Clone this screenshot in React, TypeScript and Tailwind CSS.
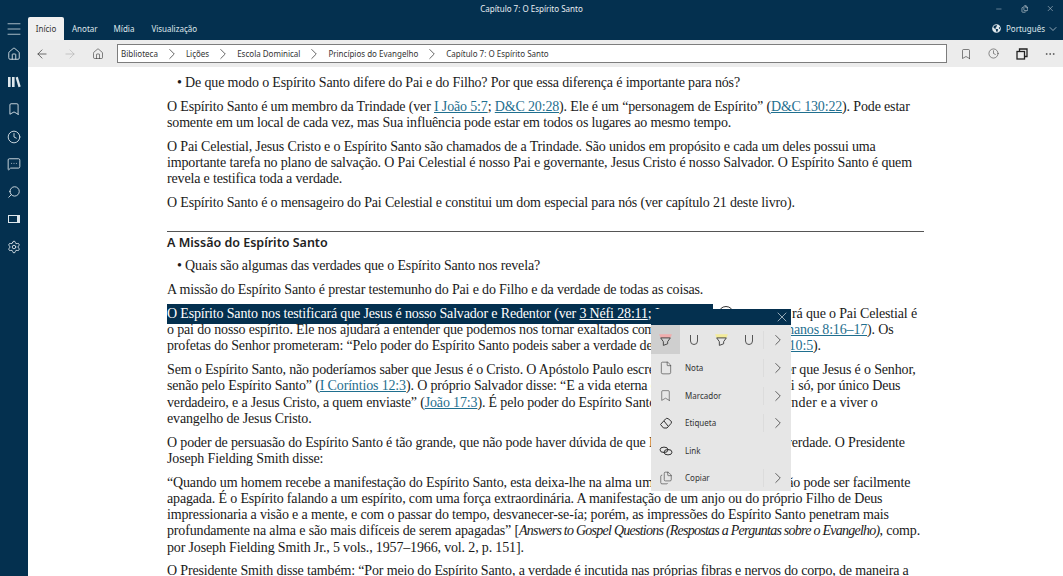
import React from 'react';
import { Menu, Home, Bookmark, Clock, MessageSquareMore, Search, Settings, ArrowLeft, ArrowRight, ChevronRight, ChevronDown, File, Files, Minus, X, MoreHorizontal } from 'lucide-react';
import { FaGlobeAmericas } from 'react-icons/fa';

const A = ({ children }: { children: React.ReactNode }) => (
  <span className="text-[#1f6f8f] underline">{children}</span>
);

const Crumb = ({ label, last }: { label: string; last?: boolean }) => (
  <>
    <span>{label}</span>
    {!last && <ChevronRight className="w-[18px] h-[18px] mx-[5px] text-[#333]" strokeWidth={1} />}
  </>
);

const Highlighter = ({ color }: { color: string }) => (
  <svg viewBox="0 0 14 14" className="w-[15px] h-[15px]" fill="none">
    <path d="M1 2h12l-1.5 3.5h-9z" fill={color} />
    <path d="M2.5 5.5h9M2.5 5.5l2.5 3.5v3.5l4-1.5v-2l2.5-3.5" stroke="#444" strokeWidth="0.9" />
  </svg>
);

const UnderlineIcon = () => (
  <svg viewBox="0 0 12 14" className="w-[12px] h-[14px]" fill="none">
    <path d="M2.5 2v6a3.5 3.5 0 0 0 7 0V2" stroke="#555" strokeWidth="1" />
  </svg>
);

const LibraryIcon = () => (
  <svg viewBox="0 0 14 14" className="w-[14px] h-[14px]" fill="#dfe7ec">
    <rect x="1" y="2" width="2.6" height="10" />
    <rect x="5" y="2" width="2.6" height="10" />
    <path d="M8.6 2.6l2.2-.8 2.9 9.6-2.2.8z" />
  </svg>
);

const EraserIcon = () => (
  <svg viewBox="0 0 14 14" className="w-[14px] h-[14px]" fill="none" stroke="#333" strokeWidth="1">
    <path d="M1.5 8.5l5-5.5a2 2 0 0 1 2.6-.3l2.6 2a2 2 0 0 1 .3 2.8L8 12H4.5z" />
    <path d="M5 5l4 5" />
  </svg>
);

const LinkIcon = () => (
  <svg viewBox="0 0 14 14" className="w-[14px] h-[14px]" fill="none" stroke="#333" strokeWidth="1">
    <ellipse cx="5" cy="5.8" rx="4" ry="2.7" />
    <ellipse cx="9" cy="8.2" rx="4" ry="2.7" />
  </svg>
);

const CopyBold = () => (
  <svg viewBox="0 0 12 12" className="w-[12px] h-[12px]" fill="none" stroke="#222" strokeWidth="1.3">
    <rect x="1" y="3.5" width="7.5" height="7.5" />
    <path d="M3.5 3.5V1H11v7.5H8.5" />
  </svg>
);

const MoreButton = () => (
  <div className="w-[28px] h-[18px] flex justify-center items-center border-l border-[#dcdcdc]">
    <ChevronRight className="w-[18px] h-[18px] text-[#333]" strokeWidth={1} />
  </div>
);

const MenuRow = ({ icon, label, more, h }: { icon: React.ReactNode; label: string; more?: boolean; h: string }) => (
  <div className={`flex items-center ${h}`}>
    <div className="w-[29px] flex justify-center">{icon}</div>
    <span className="ml-[5px] flex-1 text-[8px] text-[#333]">{label}</span>
    {more && <MoreButton />}
  </div>
);

const App: React.FC = () => {
  return (
    <div className="w-[1063px] h-[576px] overflow-hidden flex flex-col bg-white font-['Noto_Sans',sans-serif]">
      {/* Title bar */}
      <div className="h-[17px] shrink-0 bg-[#04304f] flex items-center text-white">
        <div className="w-[68px]" />
        <div className="flex-1 text-center text-[8px] text-[#e8eef2]">Capítulo 7: O Espírito Santo</div>
        <div className="w-[68px] flex items-center justify-end gap-[18px] pr-[8px] text-[#c9d3da]">
          <Minus className="w-[8px] h-[8px]" strokeWidth={1.5} />
          <Files className="w-[8px] h-[8px]" strokeWidth={2} />
          <X className="w-[9px] h-[9px]" strokeWidth={1.5} />
        </div>
      </div>

      <div className="flex-1 flex min-h-0">
        {/* Sidebar */}
        <div className="w-[28px] shrink-0 bg-[#04304f] flex flex-col items-center text-[#dfe7ec]">
          <div className="h-[23px] flex items-center"><Menu className="w-[18px] h-[18px]" strokeWidth={1} /></div>
          <div className="mt-[3px] flex flex-col items-center gap-[13.5px] pt-[4px]">
            <Home className="w-[14px] h-[14px]" strokeWidth={1.5} />
            <LibraryIcon />
            <Bookmark className="w-[14px] h-[14px]" strokeWidth={1.5} />
            <Clock className="w-[14px] h-[14px]" strokeWidth={1.5} />
            <MessageSquareMore className="w-[14px] h-[14px]" strokeWidth={1.5} />
            <Search className="w-[14px] h-[14px] -scale-x-100" strokeWidth={1.5} />
            <div className="w-[12px] h-[8px] my-[3px] border border-[#dfe7ec] border-r-[3px]" />
            <Settings className="w-[14px] h-[14px]" strokeWidth={1.5} />
          </div>
        </div>

        <div className="flex-1 flex flex-col min-w-0 relative">
          {/* Tabs */}
          <div className="h-[23px] shrink-0 bg-[#04304f] flex items-center text-[8px] text-[#dfe7ec]">
            <div className="w-[36px] h-full bg-[#f0f0f0] text-[#333] rounded-t-[2px] flex items-center justify-center">Início</div>
            <span className="ml-[8px]">Anotar</span>
            <span className="ml-[16px]">Mídia</span>
            <span className="ml-[17px]">Visualização</span>
            <div className="ml-auto pr-[4px] flex items-center gap-[5px]">
              <FaGlobeAmericas className="w-[9px] h-[9px]" />
              <span>Português</span>
              <ChevronDown className="w-[12px] h-[12px] -ml-[3px]" strokeWidth={1.3} />
            </div>
          </div>

          {/* Toolbar */}
          <div className="h-[27px] shrink-0 bg-[#ececec] flex items-center text-[#333]">
            <ArrowLeft className="w-[14px] h-[14px] ml-[7px]" strokeWidth={1.2} />
            <ArrowRight className="w-[14px] h-[14px] ml-[14px] text-[#aaa]" strokeWidth={1} />
            <Home className="w-[12px] h-[12px] ml-[15px]" strokeWidth={1.2} />
            <div className="ml-[13px] w-[830px] h-[19px] bg-white border-[1.5px] border-[#7d7d7d] flex items-center pl-[3px] text-[8px] text-[#333]">
              <Crumb label="Biblioteca" />
              <Crumb label="Lições" />
              <Crumb label="Escola Dominical" />
              <Crumb label="Princípios do Evangelho" />
              <Crumb label="Capítulo 7: O Espírito Santo" last />
            </div>
            <Bookmark className="w-[12px] h-[12px] ml-[13px]" strokeWidth={1.2} />
            <Clock className="w-[11px] h-[11px] ml-[16px]" strokeWidth={1.2} />
            <div className="ml-[17px]"><CopyBold /></div>
            <MoreHorizontal className="w-[12px] h-[12px] ml-[16px]" strokeWidth={1.2} />
          </div>

          {/* Reading page */}
          <div className="flex-1 overflow-hidden pl-[139px] w-[896px] pt-[8px] font-['Liberation_Serif',serif] text-[14px] tracking-[-0.155px] leading-[16.25px] text-[#1a1a1a] whitespace-nowrap">
            <p className="mb-[7.5px] pl-[10px]">• De que modo o Espírito Santo difere do Pai e do Filho? Por que essa diferença é importante para nós?</p>
            <p className="mb-[7.5px]">
              O Espírito Santo é um membro da Trindade (ver <A>I João 5:7</A>; <A>D&amp;C 20:28</A>). Ele é um “personagem de Espírito” (<A>D&amp;C 130:22</A>). Pode estar<br />
              somente em um local de cada vez, mas Sua influência pode estar em todos os lugares ao mesmo tempo.
            </p>
            <p className="mb-[7.5px]">
              O Pai Celestial, Jesus Cristo e o Espírito Santo são chamados de a Trindade. São unidos em propósito e cada um deles possui uma<br />
              importante tarefa no plano de salvação. O Pai Celestial é nosso Pai e governante, Jesus Cristo é nosso Salvador. O Espírito Santo é quem<br />
              revela e testifica toda a verdade.
            </p>
            <p className="mb-[20px]">O Espírito Santo é o mensageiro do Pai Celestial e constitui um dom especial para nós (ver capítulo 21 deste livro).</p>
            <div className="border-t border-[#555] pt-[2px]">
              <h2 className="font-['Noto_Sans',sans-serif] tracking-normal font-semibold text-[12.5px] leading-[18px] text-[#222] mb-[6px]">A Missão do Espírito Santo</h2>
            </div>
            <p className="mb-[7.5px] pl-[10px]">• Quais são algumas das verdades que o Espírito Santo nos revela?</p>
            <p className="mb-[7.5px]">A missão do Espírito Santo é prestar testemunho do Pai e do Filho e da verdade de todas as coisas.</p>
            <p className="mb-[7.5px]">
              <span className="inline-block w-[546px] overflow-hidden align-bottom bg-[#04304f] text-white py-[2px] -my-[2px]">O Espírito Santo nos testificará que Jesus é nosso Salvador e Redentor (ver <span className="underline">3 Néfi 28:11</span>; I</span>
              <span className="inline-block w-[204px] text-right">rá que o Pai Celestial é</span><br />
              o pai do nosso espírito. Ele nos ajudará a entender que podemos nos tornar exaltados <span className="tracking-[-0.45px]">como o Pai Celestial</span> (ver <A>Romanos 8:16–17</A>). Os<br />
              profetas do Senhor prometeram: “Pelo poder do Espírito Santo podeis saber a verdade de <span className="tracking-[-0.5px]">todas as coisas”</span> (<A>Morôni 10:5</A>).
            </p>
            <p className="mb-[7.5px]">
              Sem o Espírito Santo, não poderíamos saber que Jesus é o Cristo. O Apóstolo Paulo escreveu: “ninguém pode dizer que Jesus é o Senhor,<br />
              senão pelo Espírito Santo” (<A>I Coríntios 12:3</A>). O próprio Salvador disse: “E a vida eterna <span className="tracking-[0.15px]">é esta: que conheçam a ti</span> só, por único Deus<br />
              verdadeiro, e a Jesus Cristo, a quem enviaste” (<A>João 17:3</A>). É pelo poder do Espírito Santo <span className="tracking-[0.3px]">que podemos compreender</span> e a viver o<br />
              evangelho de Jesus Cristo.
            </p>
            <p className="mb-[7.5px]">
              O poder de persuasão do Espírito Santo é tão grande, que não pode haver dúvida de que <span className="tracking-[-0.5px]">Ele está nos testificando</span> a verdade. O Presidente<br />
              Joseph Fielding Smith disse:
            </p>
            <p className="mb-[7.5px]">
              “Quando um homem recebe a manifestação do Espírito Santo, esta deixa-lhe na alma <span className="tracking-[0.25px]">uma forte impressão</span> que não pode ser facilmente<br />
              apagada. É o Espírito falando a um espírito, com uma força extraordinária. A manifestação de um anjo ou do próprio Filho de Deus<br />
              impressionaria a visão e a mente, e com o passar do tempo, desvanecer-se-ía; porém, as impressões do Espírito Santo penetram mais<br />
              profundamente na alma e são mais difíceis de serem apagadas” [<i className="tracking-[-0.75px]">Answers to Gospel Questions (Respostas a Perguntas sobre o Evangelho)</i>, comp.<br />
              por Joseph Fielding Smith Jr., 5 vols., 1957–1966, vol. 2, p. 151].
            </p>
            <p>O Presidente Smith disse também: “Por meio do Espírito Santo, a verdade é incutida nas próprias fibras e nervos do corpo, de maneira a</p>
          </div>

          {/* Selection circle handle */}
          <div className="absolute left-[690px] top-[289px] w-[16px] h-[16px] rounded-full border border-[#333] bg-white" />

          {/* Selection popup */}
          <div className="absolute left-[623px] top-[292px] w-[140px] h-[182px] bg-[#e6e6e6]">
            <div className="h-[16px] bg-[#04304f] flex justify-end items-center pr-[1px]">
              <X className="w-[16px] h-[16px] text-[#dfe7ec]" strokeWidth={1} />
            </div>
            <div className="h-[29px] flex items-center">
              <div className="w-[29px] h-full bg-[#cfcfcf] flex items-center justify-center"><Highlighter color="#f0adad" /></div>
              <div className="w-[27px] flex justify-center"><UnderlineIcon /></div>
              <div className="w-[28px] flex justify-center"><Highlighter color="#f3eb9a" /></div>
              <div className="w-[28px] flex justify-center"><UnderlineIcon /></div>
              <MoreButton />
            </div>
            <MenuRow h="h-[28px]" icon={<File className="w-[14px] h-[14px] text-[#333]" strokeWidth={1} />} label="Nota" more />
            <MenuRow h="h-[27px]" icon={<Bookmark className="w-[13px] h-[13px] text-[#333]" strokeWidth={1} />} label="Marcador" more />
            <MenuRow h="h-[28px]" icon={<EraserIcon />} label="Etiqueta" more />
            <MenuRow h="h-[28px]" icon={<LinkIcon />} label="Link" />
            <MenuRow h="h-[26px]" icon={<Files className="w-[14px] h-[14px] text-[#333]" strokeWidth={1} />} label="Copiar" more />
          </div>
        </div>
      </div>
    </div>
  );
};

export default App;
